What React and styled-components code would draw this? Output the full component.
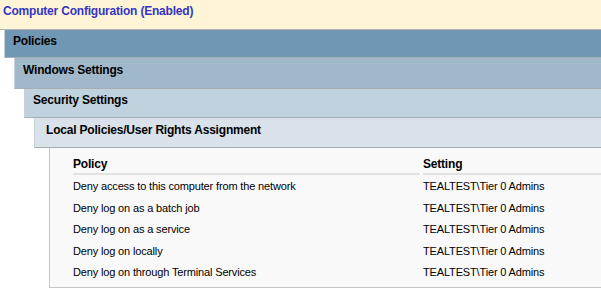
import React from 'react';
import styled, { createGlobalStyle } from 'styled-components';

const GlobalStyle = createGlobalStyle`
  html, body {
    margin: 0;
    padding: 0;
    background: #ffffff;
  }
  body {
    font-family: Tahoma, "Liberation Sans", Arial, sans-serif;
    font-size: 11px;
    color: #000000;
  }
`;

const SHADES = {
  root: '#fff5d6',
  level1: '#7097b3',
  level2: '#a1b8cb',
  level3: '#c0d2de',
  level4: '#d9e2ea',
};

const Report = styled.div`
  width: 601px;
  height: 291px;
  overflow: hidden;
`;

const Section = styled.section`
  display: flex;
  flex-direction: column;
  padding-left: ${(p) => p.$indent || 0}px;
`;

const Heading = styled.div`
  height: ${(p) => p.$height}px;
  box-sizing: border-box;
  padding: ${(p) => p.$top}px 0 0 ${(p) => p.$pad}px;
  background: ${(p) => p.$bg};
  border-bottom: 1px solid ${(p) => (p.$root ? '#b4b4b4' : '#a7aeb4')};
  border-left: ${(p) => (p.$root ? 'none' : '1px solid #c9d2da')};
  color: ${(p) => (p.$root ? '#3434c4' : '#000000')};
  font-weight: bold;
  font-size: 12px;
  letter-spacing: -0.2px;
  line-height: 14px;
  white-space: nowrap;
`;

const Table = styled.div`
  margin-left: 15px;
  height: 140px;
  box-sizing: border-box;
  background: #f9f9f9;
  border-left: 1px solid #c6c6c6;
  border-bottom: 1px solid #c6c6c6;
  padding: 7px 0 0 23px;
`;

const Row = styled.div`
  display: grid;
  grid-template-columns: 347px 1fr;
  column-gap: 3px;
  height: ${(p) => (p.$head ? 20 : 21.5)}px;
  align-items: center;
`;

const Cell = styled.div`
  height: 100%;
  display: flex;
  align-items: center;
  white-space: nowrap;
  font-weight: ${(p) => (p.$head ? 'bold' : 'normal')};
  font-size: ${(p) => (p.$head ? 12 : 11)}px;
  letter-spacing: ${(p) => (p.$head ? -0.2 : -0.15)}px;
  border-bottom: ${(p) => (p.$head ? '2px solid #e2e2e2' : 'none')};
  box-sizing: border-box;
  padding-top: ${(p) => (p.$head ? 0 : 1)}px;
`;

const rights = [
  'Deny access to this computer from the network',
  'Deny log on as a batch job',
  'Deny log on as a service',
  'Deny log on locally',
  'Deny log on through Terminal Services',
];

export default function App() {
  return (
    <>
      <GlobalStyle />
      <Report>
        <Heading $root $height={30} $top={4} $pad={3} $bg={SHADES.root}>
          Computer Configuration (Enabled)
        </Heading>
        <Section $indent={4}>
          <Heading $height={28} $top={4} $pad={8} $bg={SHADES.level1}>
            Policies
          </Heading>
          <Section $indent={10}>
            <Heading $height={31} $top={5} $pad={8} $bg={SHADES.level2}>
              Windows Settings
            </Heading>
            <Section $indent={10}>
              <Heading $height={29} $top={4} $pad={8} $bg={SHADES.level3}>
                Security Settings
              </Heading>
              <Section $indent={10}>
                <Heading $height={30} $top={5} $pad={11} $bg={SHADES.level4}>
                  Local Policies/User Rights Assignment
                </Heading>
                <Table>
                  <Row $head>
                    <Cell $head>Policy</Cell>
                    <Cell $head>Setting</Cell>
                  </Row>
                  {rights.map((r) => (
                    <Row key={r}>
                      <Cell>{r}</Cell>
                      <Cell>TEALTEST\Tier 0 Admins</Cell>
                    </Row>
                  ))}
                </Table>
              </Section>
            </Section>
          </Section>
        </Section>
      </Report>
    </>
  );
}
